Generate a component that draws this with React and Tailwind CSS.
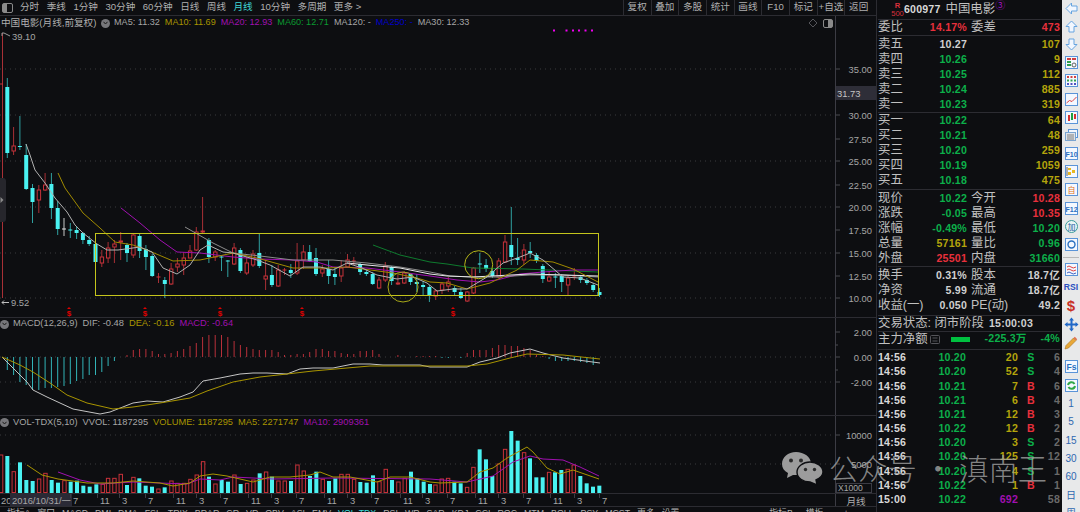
import React from 'react';

const BG = '#0d0e11';

// [high, bodyTop, bodyBottom, low, colour]
const candles = [
  [78,87,153,158,'c'],[127,146,151,155,'r'],[116,146,147,150,'c'],[144,155,189,190,'c'],[184,188,202,223,'c'],
  [185,190,200,213,'r'],[173,185,190,191,'r'],[173,184,208,219,'c'],[201,208,229,235,'c'],[218,229,229,236,'w'],
  [223,230,230,238,'c'],[226,230,233,239,'c'],[232,233,240,244,'c'],[236,240,244,246,'c'],[242,244,262,265,'c'],
  [250,257,263,267,'r'],[242,248,258,263,'r'],[240,244,247,263,'r'],[232,241,242,260,'r'],[243,245,253,262,'c'],
  [233,235,255,258,'r'],[233,236,251,258,'c'],[245,249,257,270,'c'],[254,256,276,277,'c'],[273,277,277,283,'r'],
  [277,280,284,298,'c'],[263,269,284,285,'r'],[258,264,267,272,'r'],[252,258,265,275,'r'],[245,251,258,258,'r'],
  [227,232,250,251,'r'],[197,231,232,233,'r'],[238,240,257,263,'c'],[250,252,257,261,'r'],[256,257,257,271,'c'],
  [260,261,261,277,'c'],[243,248,264,265,'r'],[248,250,271,273,'c'],[257,263,273,275,'r'],[250,254,265,267,'r'],
  [233,253,266,268,'c'],[260,276,279,290,'r'],[265,275,285,287,'c'],[265,270,286,287,'r'],[268,270,270,275,'r'],
  [264,270,273,278,'c'],[243,261,273,275,'r'],[245,252,260,269,'r'],[245,252,261,262,'c'],[248,258,274,276,'c'],
  [265,269,273,277,'r'],[260,269,276,284,'c'],[268,274,277,285,'c'],[260,268,276,282,'r'],[254,260,267,268,'r'],
  [257,261,261,265,'r'],[263,264,272,275,'c'],[270,272,274,276,'c'],[272,274,284,285,'c'],[277,280,288,289,'r'],
  [262,266,280,282,'r'],[266,267,281,285,'c'],[275,283,284,285,'r'],[271,273,283,284,'r'],[273,274,282,285,'c'],
  [274,282,284,292,'c'],[281,285,287,295,'c'],[285,287,296,302,'c'],[289,291,296,300,'r'],[282,284,290,294,'r'],
  [277,282,286,292,'r'],[286,288,292,295,'c'],[288,292,298,299,'c'],[291,292,301,302,'r'],[267,268,293,294,'r'],
  [253,264,264,273,'c'],[259,265,269,272,'c'],[269,271,276,278,'c'],[258,261,277,278,'r'],[235,242,262,263,'r'],
  [207,245,257,265,'c'],[238,258,260,265,'c'],[244,250,260,265,'r'],[242,251,253,258,'c'],[253,255,261,263,'c'],
  [264,266,279,283,'c'],[272,277,281,282,'r'],[273,277,277,288,'c'],[274,276,282,292,'c'],[275,278,285,295,'r'],
  [268,277,277,280,'r'],[275,277,280,283,'c'],[278,280,283,285,'c'],[283,285,290,292,'c'],[288,292,295,297,'c'],
];

const macdBars = [
  -13,-18,-25,-28,-33,-33,-31,-31,-30,-29,-27,-24,-22,-18,-18,-15,-9,-4,0,2,7,8,8,6,3,3,4,6,8,11,14,20,22,22,22,
  20,16,12,10,8,7,7,7,5,2,2,3,3,5,8,8,6,6,4,3,3,6,6,7,3,0,0,2,0,0,1,1,1,1,-1,-1,0,-1,4,7,7,7,9,12,12,11,
  11,9,7,2,1,-2,-4,-4,-4,-4,-5,-6,-8,
];

const volBars = [
  [3,345,'r'],[22,348,'c'],[41,395,'r'],[60,367,'c'],[79,420,'c'],[98,423,'c'],[117,417,'r'],[136,400,'r'],[155,420,'c'],
  [174,428,'c'],[193,422,'r'],[212,425,'c'],[231,422,'c'],[250,437,'c'],[269,440,'c'],[289,433,'c'],[308,433,'r'],[324,415,'r'],
  [343,415,'r'],[362,403,'r'],[381,435,'c'],[400,412,'r'],[418,415,'c'],[437,437,'c'],[456,440,'c'],[475,447,'r'],[494,442,'c'],
  [514,423,'r'],[532,430,'r'],[552,430,'r'],[571,418,'r'],[590,405,'r'],[609,365,'r'],[627,410,'c'],[646,432,'r'],[665,420,'c'],
  [684,425,'c'],[703,405,'r'],[722,432,'c'],[741,430,'r'],[760,420,'r'],[779,400,'c'],[798,396,'r'],[816,410,'c'],[835,423,'r'],
  [854,423,'r'],[873,423,'c'],[892,375,'r'],[911,393,'r'],[930,408,'c'],[949,395,'c'],[968,418,'r'],[987,423,'c'],[1006,415,'c'],
  [1024,403,'r'],[1043,403,'r'],[1062,418,'r'],[1081,426,'c'],[1100,428,'c'],[1119,406,'c'],[1138,425,'r'],[1157,388,'r'],
  [1176,420,'c'],[1195,426,'r'],[1214,415,'r'],[1233,395,'c'],[1252,415,'c'],[1271,425,'c'],[1290,432,'c'],
  [1306,435,'r'],[1325,417,'r'],[1344,415,'r'],[1363,425,'c'],[1382,430,'c'],[1401,442,'r'],[1420,382,'r'],[1439,328,'c'],
  [1458,358,'c'],[1477,408,'c'],[1496,372,'r'],[1515,328,'r'],[1534,273,'c'],[1553,302,'c'],[1572,338,'r'],[1590,355,'c'],
  [1609,412,'c'],[1628,412,'c'],[1647,397,'r'],[1665,397,'c'],[1684,390,'c'],[1703,388,'r'],[1721,375,'r'],[1741,408,'c'],
  [1760,430,'c'],[1779,440,'c'],[1798,437,'c'],
];

const ma5 = '26,144 30,155 35,170 45,183 55,198 67,212 75,225 83,233 97,244 107,250 118,250 140,247 152,252 163,268 177,274 190,265 200,250 208,245 223,252 233,253 257,260 270,265 290,276 303,267 320,267 333,270 347,263 362,268 377,275 397,279 413,277 427,283 437,291 453,289 467,289 487,277 503,263 520,257 530,253 543,260 563,277 580,278 598,285';
const ma10 = '58,173 65,188 83,213 100,228 115,242 133,245 147,250 173,261 200,260 233,253 257,258 293,268 327,268 347,267 363,269 393,273 417,278 430,282 447,283 467,289 490,283 517,270 530,260 553,262 573,269 598,282';
const ma20 = '121,208 140,223 160,240 177,252 200,253 233,257 260,259 293,260 317,262 333,267 367,268 400,272 430,276 457,280 480,282 497,280 520,274 543,272 573,270 598,270';
const ma30 = '185,227 213,243 233,253 260,256 293,260 333,260 367,263 400,267 430,272 450,276 473,277 497,277 530,275 563,275 598,277';
const maW = '347,263 367,265 400,268 430,274 447,276 473,277 530,274 598,276';
const ma60 = '373,245 400,255 430,262 447,264 473,268 523,269 598,272';

const difLine = '2,357 13,368 27,382 33,390 47,397 60,403 73,409 100,414 110,412 133,403 147,401 163,402 180,397 193,392 203,381 220,378 240,374 253,373 267,373 287,374 300,369 313,368 333,368 353,364 370,364 383,365 420,365 430,367 467,367 480,362 497,358 510,353 530,349 543,353 563,358 600,363';
const deaLine = '2,357 20,365 33,372 50,383 67,395 87,403 113,409 133,407 160,403 190,398 207,391 233,382 260,377 287,374 313,371 347,368 370,366 430,366 467,366 487,364 510,358 527,354 563,355 600,359';
const volMa5 = '27,465 42,475 58,479 87,483 113,483 133,481 160,483 173,486 190,483 200,476 213,474 227,476 253,482 270,477 290,477 310,475 320,472 333,477 350,477 377,482 390,477 410,477 430,482 440,483 467,482 480,472 493,468 507,458 527,447 533,452 547,468 560,474 573,470 599,479';
const volMa10 = '58,472 80,480 100,484 133,482 187,484 200,479 220,480 233,477 273,479 333,478 430,479 467,482 493,476 513,462 530,456 543,459 563,460 580,467 599,476';

function Line({ points, color, width = 1 }) {
  return <polyline points={points} fill="none" stroke={color} strokeWidth={width} />;
}

function Dotted({ y }) {
  return <line x1="0" x2="835" y1={y} y2={y} stroke="#3a3a3e" strokeDasharray="1 4" />;
}

function AxisLabel({ y, children }) {
  return (
    <g>
      <line x1="835.5" x2="840" y1={y} y2={y} stroke="#4a4a50" />
      <text x="872" y={y + 3.5} textAnchor="end" className="fill-[#a6a6a6] text-[9.4px]">{children}</text>
    </g>
  );
}

function Candle({ c, i }) {
  const x = 7.3 + 6.3 * i;
  const [high, top, bot, low, kind] = c;
  const wick = kind === 'r' ? '#a83036' : kind === 'w' ? '#c8c8c8' : '#2fa0a0';
  if (top === bot) {
    return (
      <g>
        <line x1={x} x2={x} y1={high} y2={low} stroke={wick} />
        <line x1={x - 2} x2={x + 2} y1={top} y2={top} stroke={kind === 'r' ? '#d8343a' : kind === 'w' ? '#e0e0e0' : '#4af2f2'} />
      </g>
    );
  }
  return (
    <g>
      <line x1={x} x2={x} y1={high} y2={low} stroke={wick} />
      {kind === 'r' ? (
        <rect x={x - 1.6} y={top} width="3.4" height={bot - top} fill={BG} stroke="#c8323a" />
      ) : (
        <rect x={x - 2} y={top} width="4" height={bot - top} fill="#4af2f2" />
      )}
    </g>
  );
}

function SignalMark({ x }) {
  return (
    <g>
      <path d={`M${x} 307 l2 2 h-4 z`} fill="#e00000" />
      <text x={x} y="316" textAnchor="middle" className="fill-[#e00000] text-[8px] font-bold">$</text>
    </g>
  );
}

function MainChart() {
  return (
    <svg width="876" height="287" viewBox="0 30 876 287" className="block overflow-visible">
      {[69, 115, 161, 207, 253, 298].map((y) => <Dotted key={y} y={y} />)}
      <line x1="835.5" x2="835.5" y1="16" y2="317" stroke="#3c3c44" />
      <AxisLabel y={69}>35.00</AxisLabel>
      <AxisLabel y={115}>30.00</AxisLabel>
      <AxisLabel y={139}>27.50</AxisLabel>
      <AxisLabel y={161}>25.00</AxisLabel>
      <AxisLabel y={185}>22.50</AxisLabel>
      <AxisLabel y={207}>20.00</AxisLabel>
      <AxisLabel y={230}>17.50</AxisLabel>
      <AxisLabel y={253}>15.00</AxisLabel>
      <AxisLabel y={276}>12.50</AxisLabel>
      <AxisLabel y={298}>10.00</AxisLabel>
      <rect x="836" y="86" width="40" height="14" fill="#2e2e38" />
      <text x="837" y="96.5" className="fill-[#c4c4c4] text-[9.4px]">31.73</text>

      <line x1="2.5" x2="2.5" y1="33" y2="298" stroke="#a83036" />
      <line x1="0" x2="3" y1="84" y2="84" stroke="#c8323a" />
      <path d="M2 36 V33 H4 M4 33 L10 36" fill="none" stroke="#9a9a9a" />
      <text x="12" y="39.5" className="fill-[#a6a6a6] text-[9.4px]">39.10</text>
      <path d="M9 302.5 H2 M4 300.5 L2 302.5 L4 304.5" fill="none" stroke="#c0c0c0" />
      <text x="11" y="306" className="fill-[#a6a6a6] text-[9.4px]">9.52</text>

      {candles.map((c, i) => <Candle key={i} c={c} i={i} />)}

      <Line points={ma60} color="#0d7a2e" />
      <Line points={ma20} color="#a010b0" />
      <Line points={ma30} color="#8c8c8c" />
      <Line points={maW} color="#e8e8e8" />
      <Line points={ma10} color="#a08a00" />
      <Line points={ma5} color="#b0b0b0" />

      <rect x="95.5" y="233.5" width="503" height="62" fill="none" stroke="#c4c41c" />
      <circle cx="403" cy="287" r="15" fill="none" stroke="#a8a818" />
      <circle cx="478.7" cy="264.7" r="14" fill="none" stroke="#b4b418" />

      {[554, 566.5, 573, 579, 585.5, 592].map((x) => (
        <rect key={x} x={x - 1} y="29.5" width="2" height="2" fill="#f000f0" />
      ))}
      {[69, 145, 220, 302, 453].map((x) => <SignalMark key={x} x={x} />)}

      <path d="M813 19 l4 4 l-4 4 l-4 -4 z" fill="none" stroke="#55555a" />
      <rect x="823.5" y="19.5" width="9" height="8" rx="1.5" fill="none" stroke="#8a8a8a" />
      <rect x="828" y="20" width="4" height="7" fill="#8a8a8a" />
    </svg>
  );
}

function MacdChart() {
  return (
    <svg width="876" height="85" viewBox="0 330 876 85" className="block overflow-visible">
      <Dotted y={357} />
      <Dotted y={382} />
      <line x1="835.5" x2="835.5" y1="318" y2="415" stroke="#3c3c44" />
      <AxisLabel y={332}>2.00</AxisLabel>
      <AxisLabel y={357}>0.00</AxisLabel>
      <AxisLabel y={382}>-2.00</AxisLabel>
      <line x1="835.5" x2="838" y1="345" y2="345" stroke="#4a4a50" />
      <line x1="835.5" x2="838" y1="370" y2="370" stroke="#4a4a50" />
      {macdBars.map((v, i) => {
        const x = 7.3 + 6.3 * i;
        if (v === 0) return null;
        return (
          <line key={i} x1={x} x2={x} y1="357" y2={357 - v} stroke={v > 0 ? '#b8303a' : '#32b4b8'} />
        );
      })}
      <Line points={difLine} color="#c4c4c4" />
      <Line points={deaLine} color="#a89400" />
    </svg>
  );
}

function VolChart() {
  return (
    <svg width="876" height="64" viewBox="0 429 876 64" className="block overflow-visible">
      <Dotted y={435} />
      <Dotted y={464} />
      <line x1="835.5" x2="835.5" y1="416" y2="493" stroke="#3c3c44" />
      <AxisLabel y={435}>10000</AxisLabel>
      <AxisLabel y={464}>5000</AxisLabel>
      {volBars.map(([xz, top, kind], i) => {
        const x = xz / 3;
        const y = 340 + top / 3;
        return kind === 'r' ? (
          <rect key={i} x={x - 1.6} y={y} width="3.4" height={492.5 - y} fill={BG} stroke="#c8323a" />
        ) : (
          <rect key={i} x={x - 2} y={y} width="4" height={493 - y} fill="#4af2f2" />
        );
      })}
      <Line points={volMa10} color="#a010b0" />
      <Line points={volMa5} color="#a89400" />
      <rect x="836.5" y="483.5" width="35" height="9" fill={BG} stroke="#3c3c44" />
      <text x="838" y="491" className="fill-[#a6a6a6] text-[8.6px]">X1000</text>
    </svg>
  );
}

function PaneIcon() {
  return (
    <span className="w-[9px] h-[9px] rounded-full bg-[#77777b] flex items-center justify-center shrink-0">
      <svg width="5" height="4" viewBox="0 0 5 4"><path d="M0.5 0.8 L2.5 3 L4.5 0.8" fill="none" stroke="#1a1a1a" /></svg>
    </span>
  );
}

function Toolbar() {
  const left = ['分时', '季线', '1分钟', '30分钟', '60分钟', '日线', '周线', '月线', '10分钟', '多周期', '更多 >'];
  const right = ['复权', '叠加', '多股', '统计', '画线', 'F10', '标记', '+自选', '返回'];
  return (
    <div className="h-[16px] flex items-center border-b border-[#2c2c32] text-[9.6px] text-[#b0b0b0] pl-[2px]">
      <svg width="11" height="10" viewBox="0 0 11 10" className="mr-[7px]">
        <rect x="0.5" y="0.5" width="10" height="9" rx="1.5" fill="none" stroke="#8a8a8a" />
        <rect x="1" y="1" width="4" height="8" fill="#8a8a8a" />
      </svg>
      <div className="flex gap-[7.5px]">
        {left.map((t) => (
          <span key={t} className={t === '月线' ? 'text-[#40d8d8]' : ''}>{t}</span>
        ))}
      </div>
      <div className="ml-auto flex h-full pr-[4px]">
        {right.map((t) => (
          <span key={t} className="w-[27.7px] flex items-center justify-center border-l border-[#2c2c32] whitespace-nowrap">{t}</span>
        ))}
      </div>
    </div>
  );
}

function BottomTabs() {
  const tabs = ['指标A', '窗口', 'MACD', 'DMI', 'DMA', 'FSL', 'TRIX', 'BRAR', 'CR', 'VR', 'OBV', 'ASI', 'EMV', 'VOL-TDX', 'RSI', 'WR', 'SAR', 'KDJ', 'CCI', 'ROC', 'MTM', 'BOLL', 'PSY', 'MCST', '更多', '设置'];
  return (
    <div className="h-[6px] overflow-hidden flex items-start pl-[7px] text-[8.8px] leading-[12px] text-[#b0b0b0] border-t border-[#2c2c32] whitespace-nowrap">
      <div className="flex gap-[7px]">
        {tabs.map((t) => (
          <span key={t} className={t === 'VOL-TDX' ? 'text-[#40d8d8]' : ''}>{t}</span>
        ))}
      </div>
      <span className="ml-[90px]">指标B</span>
      <span className="ml-[13px]">模板</span>
      <span className="ml-[20px]">+</span>
    </div>
  );
}

function DateAxis() {
  const ticks = [
    ['7', 73], ['11', 100], ['3', 122], ['7', 148], ['11', 176], ['3', 199], ['7', 223], ['11', 251], ['3', 274], ['7', 299],
    ['11', 327], ['3', 350], ['7', 374], ['11', 403], ['3', 425], ['7', 450], ['11', 478], ['3', 501], ['7', 526], ['11', 553],
    ['3', 577], ['7', 602],
  ];
  return (
    <div className="h-[13px] flex border-t border-[#2c2c32]">
      <svg width="836" height="12" viewBox="0 494 836 12" className="block">
        <text x="1" y="503.5" className="fill-[#a6a6a6] text-[9.4px]">20</text>
        <rect x="10" y="494" width="62" height="12" fill="#2a2a36" />
        <text x="12" y="503.5" className="fill-[#a6a6a6] text-[9.4px]">2016/10/31/一</text>
        {ticks.map(([t, x]) => (
          <g key={x}>
            <line x1={x - 2.5} x2={x - 2.5} y1="494" y2="498" stroke="#3c3c44" />
            <text x={x} y="503.5" className="fill-[#a6a6a6] text-[9.4px]">{t}</text>
          </g>
        ))}
        <line x1="835.5" x2="835.5" y1="494" y2="506" stroke="#3c3c44" />
      </svg>
      <span className="w-[40px] text-center text-[9.6px] leading-[15px] text-[#b0b0b0]">月线</span>
    </div>
  );
}

function LeftColumn() {
  return (
    <div className="w-[876px] flex flex-col shrink-0">
      <Toolbar />
      <div className="h-[14px] flex items-center pl-[1px] text-[9.1px] gap-[5px] whitespace-nowrap text-[#a6a6a6]">
        <span className="text-[#b0b0b0] text-[9.6px] w-[95px]">中国电影(月线,前复权)</span>
        <PaneIcon />
        <span className="ml-[-1px]">MA5: 11.32</span>
        <span className="text-[#a89400]">MA10: 11.69</span>
        <span className="text-[#a010b0]">MA20: 12.93</span>
        <span className="text-[#0a9a30]">MA60: 12.71</span>
        <span>MA120: -</span>
        <span className="text-[#0000c8]">MA250: -</span>
        <span>MA30: 12.33</span>
      </div>
      <MainChart />
      <div className="h-[13px] flex items-center text-[9.3px] gap-[5px] border-t border-[#2c2c32] whitespace-nowrap text-[#a6a6a6]">
        <PaneIcon />
        <span className="ml-[-1px]">MACD(12,26,9)</span>
        <span>DIF: -0.48</span>
        <span className="text-[#a89400]">DEA: -0.16</span>
        <span className="text-[#a010b0]">MACD: -0.64</span>
      </div>
      <MacdChart />
      <div className="h-[14px] flex items-center text-[9.3px] gap-[5px] border-t border-[#2c2c32] whitespace-nowrap text-[#a6a6a6]">
        <PaneIcon />
        <span className="ml-[-1px]">VOL-TDX(5,10)</span>
        <span>VVOL: 1187295</span>
        <span className="text-[#a89400]">VOLUME: 1187295</span>
        <span className="text-[#a89400]">MA5: 2271747</span>
        <span className="text-[#a010b0]">MA10: 2909361</span>
      </div>
      <VolChart />
      <DateAxis />
      <BottomTabs />
    </div>
  );
}

const num = 'text-[10.6px] font-bold tracking-[0.2px]';
const label = 'text-[12.4px] leading-none text-[#c0c0c0] whitespace-nowrap';
const UP = 'text-[#e8303c]';
const DOWN = 'text-[#0cb04a]';
const YEL = 'text-[#b4a40c]';
const WHT = 'text-[#d0d0d0]';

function BookRow({ name, price, vol, color = DOWN }) {
  return (
    <div className="h-[15px] flex items-center">
      <span className={`${label} w-[25px]`}>{name}</span>
      <span className={`${num} ${color} w-[64px] text-right`}>{price}</span>
      <span className={`${num} ${YEL} flex-1 text-right`}>{vol}</span>
    </div>
  );
}

function StatRow({ a, av, ac = WHT, b, bv, bc = WHT, aw = 'w-[25px]', vw = 'w-[64px]' }) {
  return (
    <div className="h-[15px] flex items-center">
      <span className={`${label} ${aw}`}>{a}</span>
      <span className={`${num} ${ac} ${vw} text-right`}>{av}</span>
      <span className={`${label} ml-[4px]`}>{b}</span>
      <span className={`${num} ${bc} flex-1 text-right`}>{bv}</span>
    </div>
  );
}

function TickRow({ t, price, vol, side, n, volColor = YEL }) {
  return (
    <div className="h-[14.2px] flex items-center">
      <span className={`${num} text-[#d8d8d8] w-[34px]`}>{t}</span>
      <span className={`${num} ${DOWN} w-[54px] text-right`}>{price}</span>
      <span className={`${num} ${volColor} w-[52px] text-right`}>{vol}</span>
      <span className={`${num} ${side === 'B' ? UP : DOWN} w-[26px] text-center`}>{side}</span>
      <span className={`${num} text-[#6a6a6a] flex-1 text-right`}>{n}</span>
    </div>
  );
}

function RightPanel() {
  const ticks = [
    ['14:56', '10.20', '20', 'S', '6'], ['14:56', '10.20', '52', 'S', '4'], ['14:56', '10.21', '7', 'B', '6'], ['14:56', '10.21', '6', 'B', '4'],
    ['14:56', '10.21', '12', 'B', '3'], ['14:56', '10.22', '12', 'B', '2'], ['14:56', '10.20', '3', 'S', '2'], ['14:56', '10.20', '125', 'S', '12'],
    ['14:56', '10.20', '4', 'S', '1'], ['14:56', '10.22', '1', 'B', '1'],
  ];
  return (
    <div className="w-[186px] shrink-0 flex flex-col border-l border-[#2c2c32] pl-[1px] pr-[2px] h-[512px] overflow-hidden">
      <div className="h-[20px] flex items-center border-b border-[#2c2c32] pl-[14px]">
        <div className="w-[11px] flex flex-col items-center text-[#d8303c] leading-[8px] text-[7.6px]">
          <span className="font-bold">R</span>
          <span>500</span>
        </div>
        <span className={`${num} text-[#d8d8d8] ml-[1px]`}>600977</span>
        <span className={`${label} ml-[5px]`}>中国电影</span>
        <span className="text-[#a010c0] text-[10px] self-start leading-[11px]">③</span>
      </div>
      <div className="h-[16px] border-b border-[#2c2c32]">
        <StatRow a="委比" av="14.17%" ac={UP} b="委差" bv="473" bc={UP} />
      </div>
      <div className="pt-[1px] border-b border-[#2c2c32]">
        <BookRow name="卖五" price="10.27" vol="107" color={WHT} />
        <BookRow name="卖四" price="10.26" vol="9" />
        <BookRow name="卖三" price="10.25" vol="112" />
        <BookRow name="卖二" price="10.24" vol="885" />
        <BookRow name="卖一" price="10.23" vol="319" />
      </div>
      <div className="pb-[1px] border-b border-[#2c2c32]">
        <BookRow name="买一" price="10.22" vol="64" />
        <BookRow name="买二" price="10.21" vol="48" />
        <BookRow name="买三" price="10.20" vol="259" />
        <BookRow name="买四" price="10.19" vol="1059" />
        <BookRow name="买五" price="10.18" vol="475" />
      </div>
      <div className="pt-[1px] border-b border-[#2c2c32]">
        <StatRow a="现价" av="10.22" ac={DOWN} b="今开" bv="10.28" bc={UP} />
        <StatRow a="涨跌" av="-0.05" ac={DOWN} b="最高" bv="10.35" bc={UP} />
        <StatRow a="涨幅" av="-0.49%" ac={DOWN} b="最低" bv="10.20" bc={DOWN} />
        <StatRow a="总量" av="57161" ac={YEL} b="量比" bv="0.96" bc={DOWN} />
        <StatRow a="外盘" av="25501" ac={UP} b="内盘" bv="31660" bc={DOWN} />
      </div>
      <div className="pt-[1px] pb-[2px] border-b border-[#2c2c32]">
        <StatRow a="换手" av="0.31%" b="股本" bv="18.7亿" />
        <StatRow a="净资" av="5.99" b="流通" bv="18.7亿" />
        <StatRow a="收益(一)" aw="w-[39px]" vw="w-[50px]" av="0.050" b="PE(动)" bv="49.2" />
      </div>
      <div className="h-[16px] flex items-center border-b border-[#2c2c32] whitespace-nowrap">
        <span className={label}>交易状态: 闭市阶段</span>
        <span className={`${num} text-[#d0d0d0] ml-[5px]`}>15:00:03</span>
      </div>
      <div className="h-[18px] flex items-center border-b border-[#2c2c32] pb-[3px]">
        <span className={label}>主力净额</span>
        <svg width="11" height="9" viewBox="0 0 11 9" className="ml-[2px]">
          <rect x="0.5" y="0.5" width="9" height="8" rx="1" fill="none" stroke="#55555a" />
          <path d="M2.5 3 H7.5 M2.5 6 H7.5" stroke="#55555a" />
        </svg>
        <span className="w-[19px] h-[5px] bg-[#00c040] ml-[10px]" />
        <span className={`${num} ${DOWN} ml-[15px]`}>-225.3万</span>
        <span className={`${num} ${DOWN} ml-auto`}>-4%</span>
      </div>
      <div className="pt-[1px]">
        {ticks.map((r, i) => (
          <TickRow key={i} t={r[0]} price={r[1]} vol={r[2]} side={r[3]} n={r[4]} />
        ))}
        <TickRow t="15:00" price="10.22" vol="692" side="" n="58" volColor="text-[#a010b0]" />
      </div>
    </div>
  );
}

function Box({ children }) {
  return (
    <svg width="13" height="13" viewBox="0 0 13 13">
      <rect x="0.5" y="0.5" width="12" height="12" fill="#f4f8ff" stroke="#5a94d8" />
      {children}
    </svg>
  );
}

function Arrow({ rotate }) {
  const cls = rotate === 'left' ? '-rotate-90' : rotate === 'down' ? 'rotate-180' : '';
  return (
    <svg width="13" height="13" viewBox="0 0 13 13" className={cls}>
      <path d="M6.5 1 L12 6.5 H9 V12 H4 V6.5 H1 Z" fill="#f2f7ff" stroke="#66a4e0" />
    </svg>
  );
}

function Sidebar() {
  const icons = [
    <Arrow key="a" rotate="left" />,
    <Arrow key="b" rotate="up" />,
    <Arrow key="c" rotate="down" />,
    <Box key="d"><path d="M2 2 h4 v2 h-4z M7 2 h4 v2 h-4z" fill="#d04040" /><path d="M2 5 h4 v2 h-4z M2 8 h4 v2 h-4z" fill="#30a050" /><circle cx="9" cy="9" r="2" fill="none" stroke="#606060" /></Box>,
    <Box key="e"><path d="M2 2h2v2h-2z M5.5 2h2v2h-2z M9 2h2v2h-2z" fill="#d04040" /><path d="M2 5.5h2v2h-2z M5.5 5.5h2v2h-2z M9 5.5h2v2h-2z" fill="#30a050" /><path d="M2 9h2v2h-2z M5.5 9h2v2h-2z M9 9h2v2h-2z" fill="#5050c0" /></Box>,
    <Box key="f"><path d="M1.5 10 L4.5 7.5 L7 8.5 L11.5 4" fill="none" stroke="#e04040" /></Box>,
    <Box key="g"><path d="M3 4h2v6h-2z M9 3h2v5h-2z" fill="#d83030" /><path d="M6 2h2v7h-2z" fill="#20a040" /></Box>,
    <svg key="h" width="13" height="13" viewBox="0 0 13 13"><rect x="3.5" y="0.5" width="9" height="8" fill="#f4f8ff" stroke="#5a94d8" /><rect x="0.5" y="3.5" width="10" height="8" fill="#e0e4ea" stroke="#7aa4d0" /><path d="M2 6h7 M2 8h7 M2 10h7" stroke="#808080" /></svg>,
    <Box key="i"><text x="6.5" y="9.5" textAnchor="middle" className="fill-[#2a70c0] text-[7px] font-bold">F10</text></Box>,
    <Box key="j"><path d="M3 3h3v2h-3z M3 7h3v3h-3z M7 5h3v3h-3z" fill="#e8b820" /><path d="M2 2v9" stroke="#606060" /></Box>,
    <Box key="k"><text x="6.5" y="10" textAnchor="middle" className="fill-[#e07020] text-[8px]">自</text></Box>,
    <Box key="l"><text x="6.5" y="9.5" textAnchor="middle" className="fill-[#2a70c0] text-[7px] font-bold">F12</text></Box>,
    <svg key="m" width="13" height="13" viewBox="0 0 13 13"><circle cx="6.5" cy="6.5" r="6" fill="#e8f4f4" stroke="#3a9a9a" /><text x="6.5" y="10" textAnchor="middle" className="fill-[#2a60a0] text-[8px]">加</text></svg>,
    <Box key="n"><circle cx="6.5" cy="6.5" r="3.5" fill="none" stroke="#2a70c0" strokeWidth="1.4" /></Box>,
  ];
  const tools = [
    <Box key="o"><path d="M2 4 q2 -2 4 0 t5 0 M2 7 q2 -2 4 0 t5 0" fill="none" stroke="#e04040" /><path d="M2 10 q2 -2 4 0 t5 0" fill="none" stroke="#4060c0" /></Box>,
    <span key="p" className="text-[8.6px] font-bold text-[#2a50c0] leading-none">RSI</span>,
    <span key="q" className="text-[15px] font-bold text-[#c83028] leading-none">$</span>,
    <svg key="r" width="15" height="15" viewBox="0 0 15 15"><path d="M7.5 0.5 L10 3.5 H8.5 V6.5 H11.5 V5 L14.5 7.5 L11.5 10 V8.5 H8.5 V11.5 H10 L7.5 14.5 L5 11.5 H6.5 V8.5 H3.5 V10 L0.5 7.5 L3.5 5 V6.5 H6.5 V3.5 H5 Z" fill="#2068c8" /></svg>,
    <svg key="s" width="14" height="14" viewBox="0 0 14 14"><path d="M1 13 L2 9.5 L9.5 2 L12 4.5 L4.5 12 Z" fill="#e8a838" stroke="#a87020" strokeWidth="0.6" /><path d="M9.5 2 L10.8 0.8 L13.2 3.2 L12 4.5 Z" fill="#e07050" /></svg>,
  ];
  const extras = [
    <Box key="t"><text x="6.5" y="10" textAnchor="middle" className="fill-[#2a70c0] text-[8.6px] font-bold">Fs</text></Box>,
    <Box key="u"><path d="M3 6 a3.5 3.5 0 0 1 6.5 -1 M10 7 a3.5 3.5 0 0 1 -6.5 1" fill="none" stroke="#30a848" strokeWidth="2" /></Box>,
  ];
  const periods = ['1', '5', '15', '30', '60', '日', '周'];
  return (
    <div className="w-[18px] shrink-0 bg-[#e8e9ea] flex flex-col items-center h-[512px] overflow-hidden">
      <div className="flex flex-col items-center mt-[-1px]">
        {icons.map((ic, i) => (
          <div key={i} className="h-[18.2px] flex items-center justify-center shrink-0">{ic}</div>
        ))}
      </div>
      <div className="w-[16px] h-[4px] shrink-0 border-b border-[#b8b8b8] mb-[2.2px]" />
      <div className="flex flex-col items-center mb-[6px]">
        {tools.map((ic, i) => (
          <div key={i} className="h-[18.4px] flex items-center justify-center shrink-0">{ic}</div>
        ))}
      </div>
      <div className="flex flex-col items-center">
        {extras.map((ic, i) => (
          <div key={i} className="h-[18.4px] flex items-center justify-center shrink-0">{ic}</div>
        ))}
      </div>
      <div className="flex flex-col items-center text-[10px] text-[#2f68b0]">
        {periods.map((p) => (
          <div key={p} className="h-[18.3px] flex items-center justify-center shrink-0">{p}</div>
        ))}
      </div>
    </div>
  );
}

function Watermark() {
  return (
    <div className="absolute left-[780px] top-[448px] flex items-center pointer-events-none">
      <svg width="44" height="38" viewBox="0 0 44 38">
        <path d="M16 4 C8 4 2 9 2 16 C2 20 4 23 8 25 L7 30 L13 27 C14 27 15 27 16 27 C24 27 31 22 31 15.5 C31 9 24 4 16 4Z" fill="#9c9c9c" />
        <path d="M30 14 C23 14 17 18.5 17 24 C17 30 23 34 30 34 L37 37 L36 32 C40 30 43 27 43 24 C43 18.5 37 14 30 14Z" fill="#9c9c9c" stroke={BG} strokeWidth="1.4" />
        <circle cx="11" cy="12.5" r="2" fill="#2a2a2a" />
        <circle cx="21" cy="12.5" r="2" fill="#2a2a2a" />
        <circle cx="25.5" cy="21.5" r="1.7" fill="#2a2a2a" />
        <circle cx="34.5" cy="21.5" r="1.7" fill="#2a2a2a" />
      </svg>
      <span className="ml-[5px] text-[29.3px] leading-[38px] font-light text-[#a4a4a4]/80 whitespace-nowrap font-['Noto_Sans_CJK_SC',sans-serif]">公众号 · 滇南王</span>
    </div>
  );
}

export default function App() {
  return (
    <div className="relative w-[1080px] h-[512px] overflow-hidden flex bg-[#0d0e11] font-['Liberation_Sans','Noto_Sans_CJK_SC',sans-serif]">
      <LeftColumn />
      <RightPanel />
      <Sidebar />
      <div className="absolute left-0 top-[178px] w-[6px] h-[44px] rounded-r-[3px] bg-[#26262c] flex items-center">
        <svg width="4" height="6" viewBox="0 0 4 6"><path d="M0.5 0 L3.5 3 L0.5 6 Z" fill="#8a8a8a" /></svg>
      </div>
      <Watermark />
    </div>
  );
}
